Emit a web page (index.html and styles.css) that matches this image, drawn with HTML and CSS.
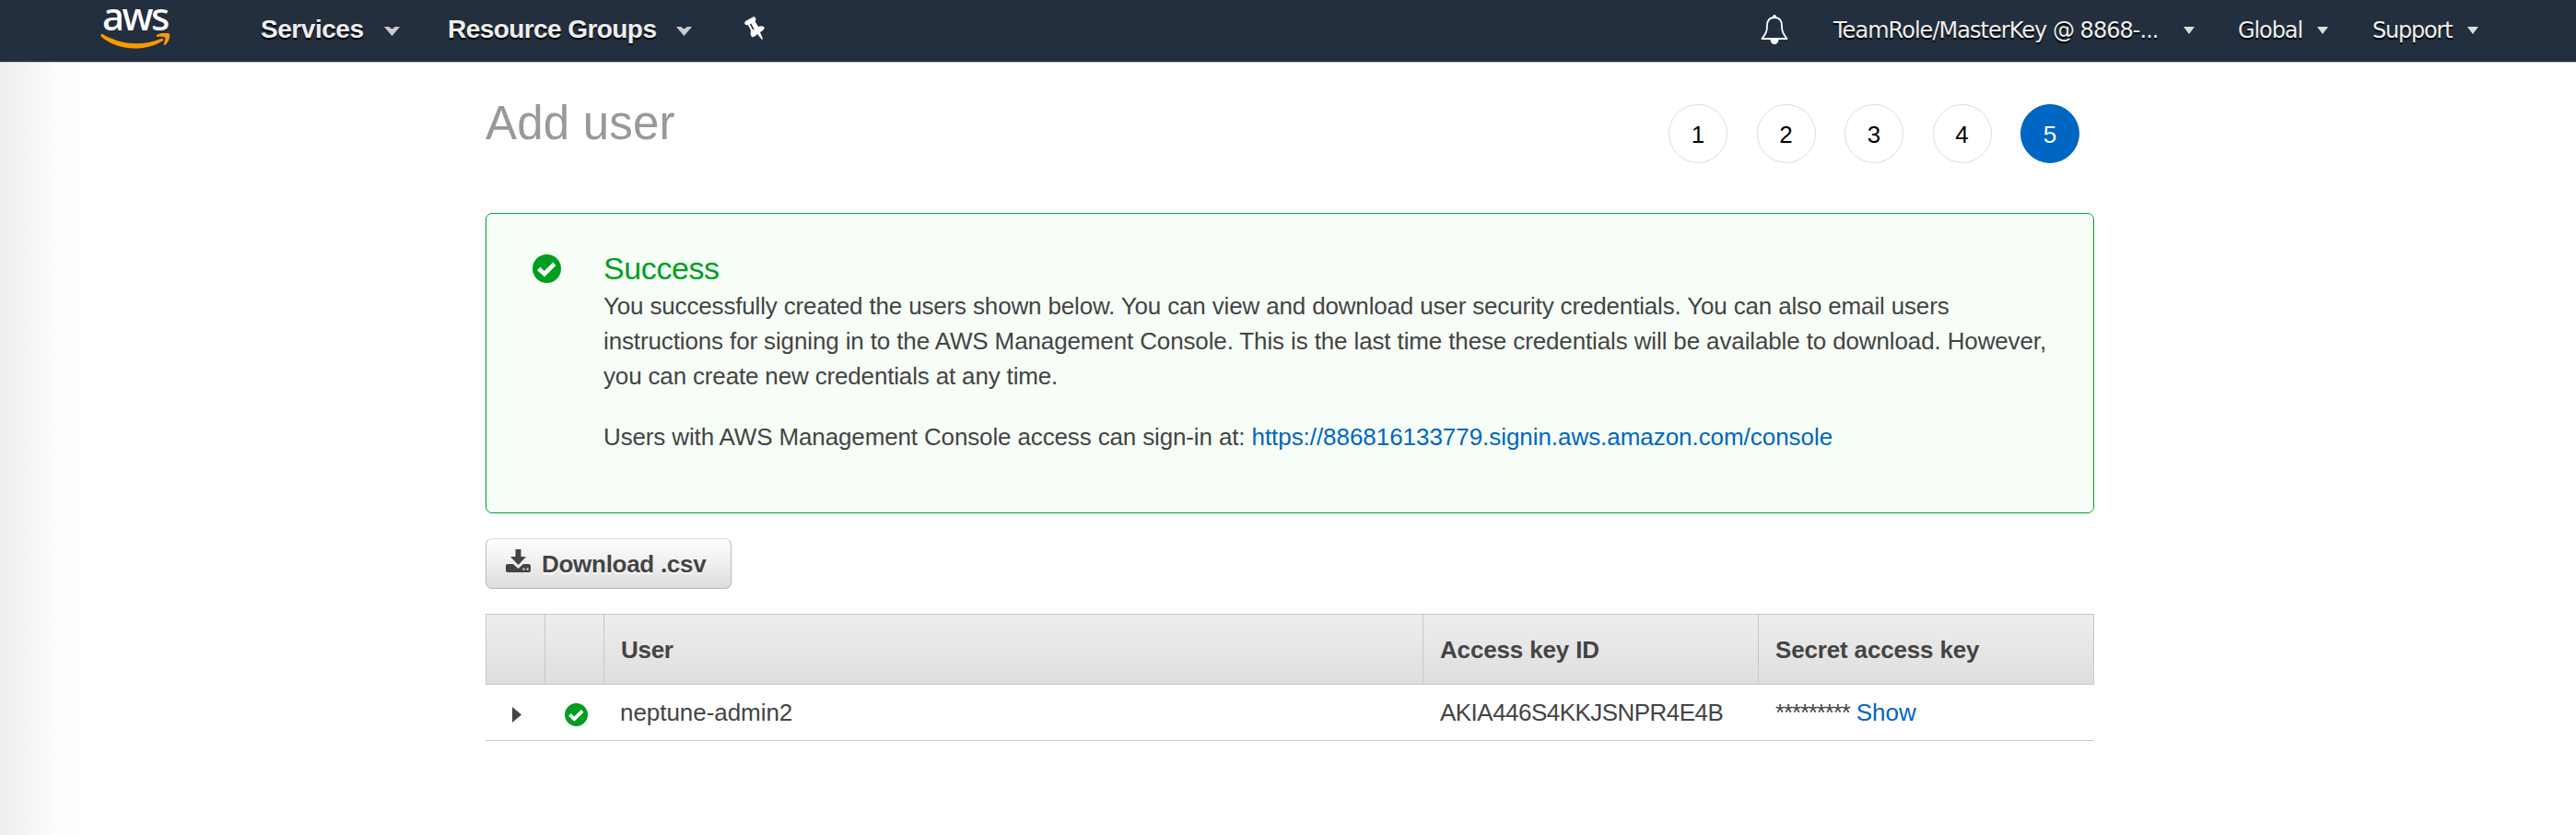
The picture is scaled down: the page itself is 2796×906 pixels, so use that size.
FILE: index.html
```html
<!DOCTYPE html>
<html lang="en">
<head>
<meta charset="utf-8">
<title>Add user</title>
<link rel="stylesheet" href="styles.css">
</head>
<body>
<header class="nav">
  <div class="logo">
    <span class="logo-text">aws</span>
    <svg class="smile" viewBox="0 0 76 17"><path fill="#f90" d="M1 1Q2 0 4 2C24 13 46 14 66 6Q69 5 68 8C50 20 20 20 1 4Q0 2 1 1ZM61 2C66-1 74-1 75 1C76 5 73 11 70 13Q68 13 69 11C71 6 71 4 68 4Q64 3 62 4Q60 3 61 2Z"/></svg>
  </div>
  <span class="menu services">Services</span>
  <svg class="chev chev-a" viewBox="0 0 17 10"><path d="M0 0H5L8.500 2.500L12 0H17L8.500 10Z"/></svg>
  <span class="menu groups">Resource Groups</span>
  <svg class="chev chev-b" viewBox="0 0 17 10"><path d="M0 0H5L8.500 2.500L12 0H17L8.500 10Z"/></svg>
  <svg class="pin" viewBox="0 0 22 25"><path fill="#fff" d="M1 5L10 0L12 1Q13 4 11.500 5L15 11Q20 9 22 12Q21 15 17 17L20 24L19 25L14 19Q11 23 8 22Q6 20 7 15L4 9Q1 10 0 7Z"/><path d="M6.500 8L10 14" stroke="#232f3e" stroke-width="1.500"/></svg>
  <svg class="bell" viewBox="0 0 30 32"><path fill="none" stroke="#fff" stroke-width="1.800" stroke-linejoin="round" d="M15 3C9 3 7 7 7 12C7 19 5 21 1.500 26H28.500C25 21 23 19 23 12C23 7 21 3 15 3Z"/><path fill="#fff" d="M13 3Q13 0 15 0Q17 0 17 3ZM10.500 27H19.500Q19 32 15 32Q11 32 10.500 27Z"/></svg>
  <span class="item account">TeamRole/MasterKey @ 8868-...</span><i class="caret caret-a"></i>
  <span class="item region">Global</span><i class="caret caret-b"></i>
  <span class="item support">Support</span><i class="caret caret-c"></i>
</header>
<main class="page">
  <div class="head">
    <h1 class="title">Add user</h1>
    <div class="steps"><span class="step">1</span><span class="step">2</span><span class="step">3</span><span class="step">4</span><span class="step active">5</span></div>
  </div>
  <section class="alert">
    <svg class="ok" viewBox="0 0 30 30"><circle cx="15" cy="15" r="15" fill="#009e1f"/><path d="M6.500 15L12.500 20.500L23 10" fill="none" stroke="#fff" stroke-width="4.500"/></svg>
    <div class="body">
      <h2 class="alert-title">Success</h2>
      <p class="line l1">You successfully created the users shown below. You can view and download user security credentials. You can also email users</p>
      <p class="line l2">instructions for signing in to the AWS Management Console. This is the last time these credentials will be available to download. However,</p>
      <p class="line l3">you can create new credentials at any time.</p>
      <p class="line signin"><span class="l4">Users with AWS Management Console access can sign-in at: </span><a class="link url">https://886816133779.signin.aws.amazon.com/console</a></p>
    </div>
  </section>
  <button class="btn">
    <svg class="dl" viewBox="0 0 27 25"><path fill="#444" d="M10.500 0H16.500V8H22L13.500 17L5 8H10.500ZM2 16H8L13.500 21L19 16H25Q27 16 27 18V23Q27 25 25 25H2Q0 25 0 23V18Q0 16 2 16Z"/><path fill="#eee" d="M18.500 20.500h2v2h-2zM22.500 20.500h2v2h-2z"/></svg>
    <span class="btn-text">Download .csv</span>
  </button>
  <div class="table">
    <div class="row thead"><div class="cell"></div><div class="cell"></div><div class="cell"><span class="h-user">User</span></div><div class="cell"><span class="h-key">Access key ID</span></div><div class="cell"><span class="h-secret">Secret access key</span></div></div>
    <div class="row trow"><div class="cell arrow"><svg class="tri" viewBox="0 0 10 17"><path fill="#444" d="M0 0L10 8.500L0 17Z"/></svg></div><div class="cell status"><svg class="ok small" viewBox="0 0 30 30"><circle cx="15" cy="15" r="15" fill="#009e1f"/><path d="M6.500 15L12.500 20.500L23 10" fill="none" stroke="#fff" stroke-width="4.500"/></svg></div><div class="cell"><span class="name">neptune-admin2</span></div><div class="cell"><span class="key">AKIA446S4KKJSNPR4E4B</span></div><div class="cell"><span class="mask">*********</span><a class="link show">Show</a></div></div>
  </div>
</main>
</body>
</html>
```
FILE: styles.css
```css
* { box-sizing: border-box; }
body { margin: 0; height: 906px; overflow: hidden; font: 26px/38px "Liberation Sans", Arial, sans-serif; color: #444; background: linear-gradient(90deg, #eee 0, #f5f5f5 30px, #fcfcfc 60px, #fff 90px); }
h1, h2, p { margin: 0; font-weight: 400; }
span, a, p, h1, h2 { white-space: pre; }
.nav { display: flex; align-items: flex-start; height: 68px; background: #232f3e; border-bottom: 1px solid #c4c7cb; padding-left: 109px; }
.nav > * { flex: none; }
.logo { width: 174px; height: 67px; display: flex; flex-direction: column; }
.logo-text { font: 500 42px/34px "Noto Sans", sans-serif; letter-spacing: -2.5px; color: #fff; height: 36px; padding-left: 2px; }
.smile { width: 76px; height: 17px; }
.menu { font-weight: 700; font-size: 28px; line-height: 32px; margin-top: 16px; color: #eee; text-shadow: 0 2px 1px #000; }
.services { width: 134px; letter-spacing: -0.45px; }
.chev { width: 17px; height: 10px; margin-top: 29px; fill: #ccc; }
.chev-a { margin-right: 52px; }
.groups { width: 248px; letter-spacing: -0.57px; }
.chev-b { margin-right: 57px; }
.pin { width: 22px; height: 25px; margin-top: 18px; margin-right: 1081px; }
.bell { width: 30px; height: 32px; margin-top: 16px; margin-right: 49px; }
.item { font: 24px/30px "DejaVu Sans", Verdana, sans-serif; margin-top: 18px; color: #eee; text-shadow: 0 2px 1px #000; }
.account { width: 380px; letter-spacing: -0.97px; }
.region { width: 86px; letter-spacing: -1.1px; }
.support { width: 103px; letter-spacing: -1.2px; }
.caret { border: 6.500px solid transparent; border-top: 8px solid #ddd; border-bottom: 0; margin-top: 29px; }
.caret-a { margin-right: 47px; }
.caret-b { margin-right: 48px; }
.page { width: 1746px; margin-left: 527px; }
.head { display: flex; justify-content: space-between; height: 163px; padding: 36px 16px 0 0; }
.title { font-size: 51px; line-height: 60px; color: #999; letter-spacing: 0.2px; }
.steps { display: flex; gap: 31.500px; margin-top: 9px; }
.step { width: 64px; height: 64px; border: 1px solid #ddd; border-radius: 50%; text-align: center; line-height: 64px; color: #000; background: #fff; }
.step.active { background: #0066c3; color: #fff; border-color: #0066c3; }
.alert { display: flex; height: 326px; border: 1px solid #00a02c; border-radius: 7px; background: #f6fef7; padding: 40px 0 0 50px; }
.ok { width: 31px; height: 31px; margin-top: 4px; flex: none; }
.body { margin-left: 46px; }
.alert-title { font-size: 34px; line-height: 38px; color: #009e1f; height: 41px; letter-spacing: -0.4px; }
.line { height: 38px; }
.l1 { letter-spacing: -0.16px; }
.l2 { letter-spacing: -0.13px; }
.l3 { letter-spacing: -0.16px; }
.l4 { letter-spacing: -0.14px; }
.url { letter-spacing: -0.05px; }
.signin { margin-top: 28px; }
.link { color: #0066c0; }
.btn { display: flex; align-items: flex-start; width: 267px; height: 55px; margin: 27px 0; padding: 11px 0 0 21px; border: 1px solid #b8b8b8; border-top-color: #ddd; border-radius: 7px; background: linear-gradient(#fff, #ddd); font: 700 26px/38px "Liberation Sans", Arial, sans-serif; color: #444; }
.dl { width: 27px; height: 25px; margin-right: 12px; }
.btn-text { margin-top: -3px; text-shadow: 0 2px 1px #fff; letter-spacing: -0.28px; }
.row { display: grid; grid-template-columns: 64px 64px 889px 364px 365px; }
.thead { height: 77px; border: 1px solid #c8c8c8; background: linear-gradient(#eee, #dedede); font-weight: 700; }
.thead .cell { padding: 19px 0 0 18px; border-right: 1px solid #c8c8c8; }
.thead .cell:last-child { border: 0; }
.h-user { letter-spacing: -0.3px; }
.h-key, .h-secret { letter-spacing: -0.16px; }
.trow { height: 61px; border-bottom: 1px solid #c8c8c8; }
.trow .cell { padding: 11px 0 0 19px; }
.trow .cell:nth-child(3) { padding-left: 18px; }
.trow .arrow { padding: 24px 0 0 29px; line-height: 0; }
.tri { width: 10px; height: 17px; }
.trow .status { padding: 20px 0 0 22px; line-height: 0; }
.small { width: 25px; height: 25px; margin: 0; }
.name { letter-spacing: -0.05px; }
.key { letter-spacing: -0.53px; }
.mask { letter-spacing: -1.15px; }
.show { margin-left: 7px; }
```
